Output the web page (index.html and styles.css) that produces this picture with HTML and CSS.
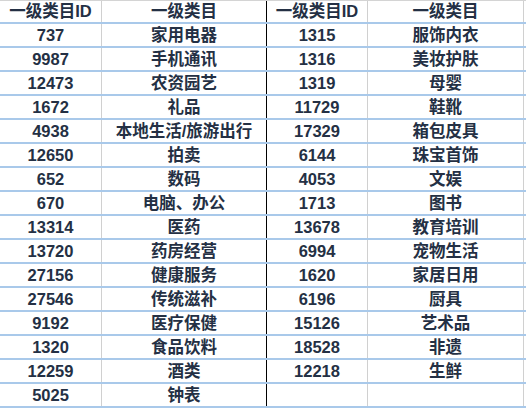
FILE: index.html
```html
<!DOCTYPE html>
<html lang="zh">
<head>
<meta charset="utf-8">
<link rel="stylesheet" href="styles.css">
</head>
<body>
<div class="table">
  <div class="row head"><div class="c id">一级类目ID</div><div class="c name mid">一级类目</div><div class="c id">一级类目ID</div><div class="c name">一级类目</div></div>
  <div class="row"><div class="c id">737</div><div class="c name mid">家用电器</div><div class="c id">1315</div><div class="c name">服饰内衣</div></div>
  <div class="row"><div class="c id">9987</div><div class="c name mid">手机通讯</div><div class="c id">1316</div><div class="c name">美妆护肤</div></div>
  <div class="row"><div class="c id">12473</div><div class="c name mid">农资园艺</div><div class="c id">1319</div><div class="c name">母婴</div></div>
  <div class="row"><div class="c id">1672</div><div class="c name mid">礼品</div><div class="c id">11729</div><div class="c name">鞋靴</div></div>
  <div class="row"><div class="c id">4938</div><div class="c name mid">本地生活/旅游出行</div><div class="c id">17329</div><div class="c name">箱包皮具</div></div>
  <div class="row"><div class="c id">12650</div><div class="c name mid">拍卖</div><div class="c id">6144</div><div class="c name">珠宝首饰</div></div>
  <div class="row"><div class="c id">652</div><div class="c name mid">数码</div><div class="c id">4053</div><div class="c name">文娱</div></div>
  <div class="row"><div class="c id">670</div><div class="c name mid">电脑、办公</div><div class="c id">1713</div><div class="c name">图书</div></div>
  <div class="row"><div class="c id">13314</div><div class="c name mid">医药</div><div class="c id">13678</div><div class="c name">教育培训</div></div>
  <div class="row"><div class="c id">13720</div><div class="c name mid">药房经营</div><div class="c id">6994</div><div class="c name">宠物生活</div></div>
  <div class="row"><div class="c id">27156</div><div class="c name mid">健康服务</div><div class="c id">1620</div><div class="c name">家居日用</div></div>
  <div class="row"><div class="c id">27546</div><div class="c name mid">传统滋补</div><div class="c id">6196</div><div class="c name">厨具</div></div>
  <div class="row"><div class="c id">9192</div><div class="c name mid">医疗保健</div><div class="c id">15126</div><div class="c name">艺术品</div></div>
  <div class="row"><div class="c id">1320</div><div class="c name mid">食品饮料</div><div class="c id">18528</div><div class="c name">非遗</div></div>
  <div class="row"><div class="c id">12259</div><div class="c name mid">酒类</div><div class="c id">12218</div><div class="c name">生鲜</div></div>
  <div class="row"><div class="c id">5025</div><div class="c name mid">钟表</div><div class="c id"></div><div class="c name"></div></div>
</div>
</body>
</html>
```
FILE: styles.css
```css
html, body {
  margin: 0;
  padding: 0;
  background: #ffffff;
}
body {
  width: 526px;
  height: 409px;
  overflow: hidden;
  font-family: "Liberation Sans", "Noto Sans CJK SC", sans-serif;
  font-weight: bold;
  font-size: 16.5px;
  color: #243044;
}
.table {
  width: 526px;
  border-top: 1px solid #d4d4d4;
}
.row {
  display: grid;
  grid-template-columns: 102px 165px 101px 156px;
  height: 22px;
  border-bottom: 2px solid #a9c9ea;
}
.row.head {
  height: 21px;
}
.c {
  display: flex;
  align-items: center;
  justify-content: center;
  border-right: 1px solid #d0d0d0;
  white-space: nowrap;
  line-height: 1;
}
.c.mid {
  border-right-color: #000000;
}
```
